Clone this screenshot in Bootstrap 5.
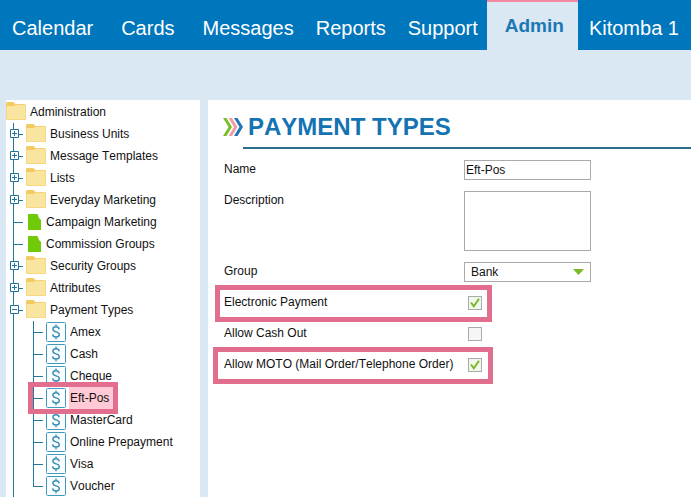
<!DOCTYPE html>
<html lang="en">
<head>
<meta charset="utf-8">
<meta name="viewport" content="width=device-width, initial-scale=1">
<title>Payment Types</title>
<link href="https://cdn.jsdelivr.net/npm/bootstrap@5.3.0/dist/css/bootstrap.min.css" rel="stylesheet">
<style>
  :root { --brand: #0076bd; --pale: #d9e8f2; --line: #2a708c; --twig: #2278a0; --rose: #e06e8c; }
  body { background: var(--pale); color: #111; font: 12px/18px "Liberation Sans", Arial, sans-serif; font-kerning: none; }
  a { color: inherit; text-decoration: none; }

  .topbar { background: var(--brand); height: 50px; font-size: 20px; line-height: 24px; padding-left: 12px; }
  .topbar .nav-link { color: #fff; padding: 16px 0 10px; margin-right: 22px; }
  .topbar .nav-link.roomy { margin-right: 28px; }
  .topbar .nav-link.before-tab { margin-right: 9px; }
  .topbar .nav-link.active { background: var(--pale); color: #1c78b5; border-top: 2px solid #f48ba3; font-size: 19px; font-weight: bold; padding: 12px 14px 12px 18px; margin-right: 11px; }

  .workspace { padding: 50px 0 0 6px; gap: 8px; }
  .tree-pane { width: 194px; padding-top: 1px; }
  .tree-line { height: 22px; gap: 4px; }
  .pic { width: 20px; height: 20px; flex: none; display: block; }
  .branch { margin-left: 7px; border-left: 1px solid var(--twig); }
  .branch .tree-line::before { content: ""; width: 9px; border-top: 1px solid var(--twig); margin-right: -1px; flex: none; }
  .toggle { position: absolute; left: -4px; top: 6px; width: 9px; height: 9px; padding: 0; border: 0; background: #fff; }
  .toggle svg { display: block; }
  .docpic { width: 13px; height: 17px; flex: none; display: block; margin: 0 1px 0 2px; }
  .twig { margin-left: 19px; }
  .twig > li { position: relative; }
  .twig > li::before { content: ""; position: absolute; inset: 0 auto 0 0; border-left: 1px solid var(--twig); }
  .twig > li:last-child::before { bottom: 11px; }
  .twig .tree-line::before { width: 10px; }
  .chosen { background: #ffc9d5; margin-left: -1px; padding: 2px 4px 2px 1px; }
  .marked { position: relative; width: max-content; }
  .marked::after { content: ""; position: absolute; inset: -5px; border: 5px solid var(--rose); pointer-events: none; z-index: 2; }

  .detail { padding: 13px 0 0 15px; min-width: 0; }
  .detail h1 { color: #1373b3; font-size: 24px; line-height: 28px; gap: 5px; }
  .rule { border-top: 2px solid var(--line); margin: 6px 0 11px 20px; }
  .fields { padding-left: 1px; gap: 11px; }
  .line-item { min-height: 20px; position: relative; }
  .line-item label { width: 240px; flex: none; }
  .field { width: 127px; border: 1px solid #aaa; border-radius: 0; background-color: #fff; color: #111; font-size: 12px; line-height: 18px; padding: 0 1px; min-height: 20px; }
  .field:focus { box-shadow: none; border-color: var(--brand); }
  textarea.field { height: 60px; resize: none; }
  select.field { padding: 0 24px 0 6px; background-image: url("data:image/svg+xml,%3Csvg xmlns='http://www.w3.org/2000/svg' viewBox='0 0 11 6'%3E%3Cpath fill='%237ab929' d='M0 0h11L5.500 6z'/%3E%3C/svg%3E"); background-size: 11px 6px; background-position: right 6px center; }
  .tick { width: 14px; height: 14px; margin: 3px 0 0 4px; border: 1px solid #aaa; background-color: #f6f6f6; appearance: none; flex: none; }
  .tick:checked { background: #f2f8ee url("data:image/svg+xml,%3Csvg xmlns='http://www.w3.org/2000/svg' viewBox='0 0 12 12'%3E%3Cpath fill='none' stroke='%237ab929' stroke-width='2' d='M2 5.500l2.800 3.800L10 1.800'/%3E%3C/svg%3E") center / 12px no-repeat; }
  .framed::after { content: ""; position: absolute; left: -9px; top: -8px; width: 277px; height: 37px; border: 5px solid var(--rose); pointer-events: none; }
  .framed.large::after { left: -11px; width: 280px; }
</style>
</head>
<body class="d-flex flex-column min-vh-100">
<svg class="d-none" xmlns="http://www.w3.org/2000/svg">
  <symbol id="folder" viewBox="0 0 20 20"><path fill="#f3cb62" d="M0 1.500Q0 0 1.500 0H7.500l2 2h9Q20 2 20 3.500V16.500q0 1.500-1.500 1.500h-17Q0 18 0 16.500z"/><path fill="#fae5a0" d="M.5 4H8L9.500 2.700h9q1 0 1 1V16.500q0 1-1 1h-17q-1 0-1-1z"/></symbol>
  <symbol id="sheet" viewBox="0 0 13 17"><path fill="#70ca08" d="M0 0h9.500L11 4l2 2v10H0z"/></symbol>
  <symbol id="money" viewBox="0 0 20 20"><rect x=".5" y=".5" width="19" height="19" rx="1" fill="#fbfeff" stroke="#4398bd"/><path fill="none" stroke="#3a8fb8" stroke-width="1.400" d="M10 2.500v2.500M10 14.800v2.400M13.200 7.300C13 5.700 11.800 4.800 10 4.800c-1.900 0-3.100 1-3.100 2.500C6.900 10.800 13.300 9 13.300 12.500c0 1.500-1.300 2.500-3.300 2.500s-3.200-1-3.400-2.600"/></symbol>
  <symbol id="plus" viewBox="0 0 9 9"><path fill="#fff" stroke="#20749a" d="M.5.5h8v8h-8zM2 4.500h5M4.500 2v5"/></symbol>
  <symbol id="minus" viewBox="0 0 9 9"><path fill="#fff" stroke="#20749a" d="M.5.5h8v8h-8zM2 4.500h5"/></symbol>
</svg>

<nav class="topbar nav flex-nowrap text-nowrap" aria-label="Main">
  <a class="nav-link roomy" href="#">Calendar</a>
  <a class="nav-link roomy" href="#">Cards</a>
  <a class="nav-link" href="#">Messages</a>
  <a class="nav-link" href="#">Reports</a>
  <a class="nav-link before-tab" href="#">Support</a>
  <a class="nav-link active" href="#" aria-current="page">Admin</a>
  <a class="nav-link" href="#">Kitomba 1</a>
</nav>

<div class="workspace d-flex flex-grow-1">
  <aside class="tree-pane bg-white d-flex flex-column flex-shrink-0 text-nowrap">
    <a class="tree-line d-flex align-items-center" href="#"><svg class="pic"><use href="#folder"/></svg>Administration</a>
    <ul class="branch list-unstyled mb-0 flex-grow-1">
      <li class="position-relative"><button class="toggle" type="button" aria-label="Expand Business Units"><svg width="9" height="9"><use href="#plus"/></svg></button><a class="tree-line d-flex align-items-center" href="#"><svg class="pic"><use href="#folder"/></svg>Business Units</a></li>
      <li class="position-relative"><button class="toggle" type="button" aria-label="Expand Message Templates"><svg width="9" height="9"><use href="#plus"/></svg></button><a class="tree-line d-flex align-items-center" href="#"><svg class="pic"><use href="#folder"/></svg>Message Templates</a></li>
      <li class="position-relative"><button class="toggle" type="button" aria-label="Expand Lists"><svg width="9" height="9"><use href="#plus"/></svg></button><a class="tree-line d-flex align-items-center" href="#"><svg class="pic"><use href="#folder"/></svg>Lists</a></li>
      <li class="position-relative"><button class="toggle" type="button" aria-label="Expand Everyday Marketing"><svg width="9" height="9"><use href="#plus"/></svg></button><a class="tree-line d-flex align-items-center" href="#"><svg class="pic"><use href="#folder"/></svg>Everyday Marketing</a></li>
      <li><a class="tree-line d-flex align-items-center" href="#"><svg class="docpic"><use href="#sheet"/></svg>Campaign Marketing</a></li>
      <li><a class="tree-line d-flex align-items-center" href="#"><svg class="docpic"><use href="#sheet"/></svg>Commission Groups</a></li>
      <li class="position-relative"><button class="toggle" type="button" aria-label="Expand Security Groups"><svg width="9" height="9"><use href="#plus"/></svg></button><a class="tree-line d-flex align-items-center" href="#"><svg class="pic"><use href="#folder"/></svg>Security Groups</a></li>
      <li class="position-relative"><button class="toggle" type="button" aria-label="Expand Attributes"><svg width="9" height="9"><use href="#plus"/></svg></button><a class="tree-line d-flex align-items-center" href="#"><svg class="pic"><use href="#folder"/></svg>Attributes</a></li>
      <li class="position-relative"><button class="toggle" type="button" aria-label="Collapse Payment Types"><svg width="9" height="9"><use href="#minus"/></svg></button><a class="tree-line d-flex align-items-center" href="#"><svg class="pic"><use href="#folder"/></svg>Payment Types</a>
        <ul class="twig list-unstyled mb-0">
          <li><a class="tree-line d-flex align-items-center" href="#"><svg class="pic"><use href="#money"/></svg>Amex</a></li>
          <li><a class="tree-line d-flex align-items-center" href="#"><svg class="pic"><use href="#money"/></svg>Cash</a></li>
          <li><a class="tree-line d-flex align-items-center" href="#"><svg class="pic"><use href="#money"/></svg>Cheque</a></li>
          <li><a class="tree-line marked d-flex align-items-center" href="#" aria-current="true"><svg class="pic"><use href="#money"/></svg><span class="chosen">Eft-Pos</span></a></li>
          <li><a class="tree-line d-flex align-items-center" href="#"><svg class="pic"><use href="#money"/></svg>MasterCard</a></li>
          <li><a class="tree-line d-flex align-items-center" href="#"><svg class="pic"><use href="#money"/></svg>Online Prepayment</a></li>
          <li><a class="tree-line d-flex align-items-center" href="#"><svg class="pic"><use href="#money"/></svg>Visa</a></li>
          <li><a class="tree-line d-flex align-items-center" href="#"><svg class="pic"><use href="#money"/></svg>Voucher</a></li>
        </ul>
      </li>
    </ul>
  </aside>

  <main class="detail bg-white flex-grow-1">
    <h1 class="d-flex align-items-center fw-bold mb-0">
      <svg width="20" height="18" viewBox="0 0 20 18" aria-hidden="true"><path fill="#7bbf2c" d="M0 0h3.500l5.500 9-5.500 9H0l5.500-9z"/><path fill="#f29aa6" d="M5.500 0H9l5.500 9L9 18H5.500l5.500-9z"/><path fill="#2273b5" d="M11 0h3.500l5.500 9-5.500 9H11l5.500-9z"/></svg>
      PAYMENT TYPES
    </h1>
    <div class="rule"></div>
    <form class="fields d-flex flex-column">
      <div class="line-item d-flex align-items-start"><label for="name">Name</label><input class="field form-control" id="name" type="text" value="Eft-Pos"></div>
      <div class="line-item d-flex align-items-start"><label for="description">Description</label><textarea class="field form-control" id="description"></textarea></div>
      <div class="line-item d-flex align-items-start"><label for="group">Group</label><select class="field form-select" id="group"><option>Bank</option></select></div>
      <div class="line-item framed d-flex align-items-start"><label for="electronic">Electronic Payment</label><input class="tick" id="electronic" type="checkbox" checked></div>
      <div class="line-item d-flex align-items-start"><label for="cashout">Allow Cash Out</label><input class="tick" id="cashout" type="checkbox"></div>
      <div class="line-item framed large d-flex align-items-start"><label for="moto">Allow MOTO (Mail Order/Telephone Order)</label><input class="tick" id="moto" type="checkbox" checked></div>
    </form>
  </main>
</div>
<script src="https://cdn.jsdelivr.net/npm/bootstrap@5.3.0/dist/js/bootstrap.bundle.min.js"></script>
</body>
</html>
